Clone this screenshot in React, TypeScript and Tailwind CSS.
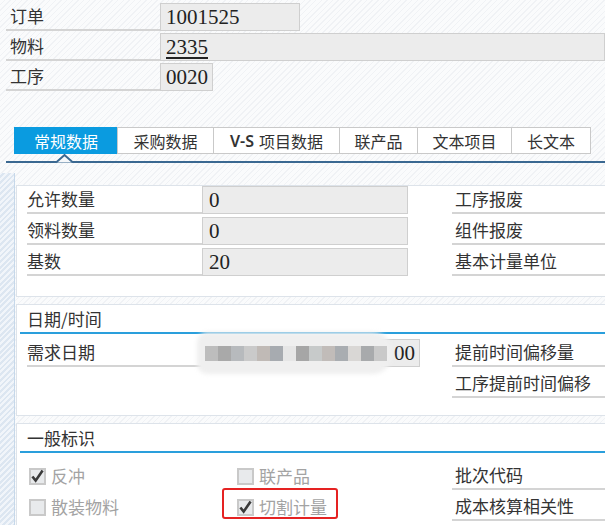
const cjk = "font-['Noto_Sans_CJK_SC','Noto_Sans',sans-serif]";
const serif = "font-['Liberation_Serif','Times_New_Roman',serif]";

const hatch =
  "bg-[image:repeating-linear-gradient(135deg,#fafbfc_0px,#fafbfc_3px,#f0f2f5_3px,#f0f2f5_4px)]";
const hatchBlue =
  "bg-[image:repeating-linear-gradient(135deg,#f1f5fa_0px,#f1f5fa_2px,#dce6f1_2px,#dce6f1_4px)]";

const tabs = [
  { label: "常规数据", w: "w-[104px]", active: true },
  { label: "采购数据", w: "w-[97px]" },
  { label: "V-S 项目数据", w: "w-[127px]" },
  { label: "联产品", w: "w-[79px]" },
  { label: "文本项目", w: "w-[95px]" },
  { label: "长文本", w: "w-[80px]" },
];

const mosaic = [
  "bg-[#bdbdbd]",
  "bg-[#a9a9a9]",
  "bg-[#b7babd]",
  "bg-[#cacaca]",
  "bg-[#c0bab6]",
  "bg-[#a7abb0]",
  "bg-[#e6e6e6]",
  "bg-[#a6a6a6]",
  "bg-[#c7caca]",
  "bg-[#c1bcb9]",
  "bg-[#a9adb1]",
  "bg-[#d9d7d5]",
  "bg-[#a8aaac]",
  "bg-[#c9c9c9]",
];

function HeadRow({
  label,
  value,
  fieldW,
  link,
}: {
  label: string;
  value: string;
  fieldW: string;
  link?: boolean;
}) {
  return (
    <div className="flex h-[28px]">
      <div
        className={`w-[154px] shrink-0 border-b-2 border-[#d4d4d4] pl-[4px] text-[17px] leading-[26px] text-[#333] ${cjk}`}
      >
        {label}
      </div>
      <div
        className={`${fieldW} border border-[#cfcfcf] bg-[#ececec] pl-[5px] text-[21px] leading-[26px] text-[#222] ${serif}`}
      >
        <span className={link ? "underline underline-offset-[3px]" : ""}>{value}</span>
      </div>
    </div>
  );
}

function Label({ text, w = "w-[175px]" }: { text: string; w?: string }) {
  return (
    <div
      className={`${w} shrink-0 border-b-2 border-[#d4d4d4] text-[17px] leading-[26px] text-[#333] ${cjk}`}
    >
      {text}
    </div>
  );
}

function Field({ value, w = "w-[206px]" }: { value: string; w?: string }) {
  return (
    <div
      className={`${w} shrink-0 border border-[#cfcfcf] bg-[#ececec] pl-[6px] text-[21px] leading-[26px] text-[#222] ${serif}`}
    >
      {value}
    </div>
  );
}

function RightLabel({ text }: { text: string }) {
  return (
    <div
      className={`ml-auto w-[153px] shrink-0 border-b-2 border-[#d4d4d4] pl-[3px] text-[17px] leading-[26px] text-[#333] ${cjk}`}
    >
      {text}
    </div>
  );
}

function Check({ checked, label }: { checked?: boolean; label: string }) {
  return (
    <div className={`flex items-center gap-[5px] text-[17px] text-[#a3a3a3] ${cjk}`}>
      <span className="flex h-[17px] w-[17px] items-center justify-center border-2 border-[#c9c9c9] bg-[#e8eaec]">
        {checked && (
          <svg width="14" height="14" viewBox="0 0 14 14">
            <path d="M1.5 7.5 L5 12 L12.5 1" fill="none" stroke="#3a3a3a" strokeWidth="2.8" />
          </svg>
        )}
      </span>
      {label}
    </div>
  );
}

function SectionHead({ text }: { text: string }) {
  return (
    <div
      className={`ml-[3px] h-[29px] border-b-2 border-[#2a9fdc] pl-[7px] text-[17px] leading-[28px] text-[#333] ${cjk}`}
    >
      {text}
    </div>
  );
}

export default function App() {
  return (
    <div className={`h-[525px] w-[605px] overflow-hidden ${hatch}`}>
      <div className="flex flex-col gap-[2px] pl-[6px] pt-[3px]">
        <HeadRow label="订单" value="1001525" fieldW="w-[140px]" />
        <HeadRow label="物料" value="2335" fieldW="flex-1" link />
        <HeadRow label="工序" value="0020" fieldW="w-[53px]" />
      </div>

      <div className="ml-[14px] mt-[36px] flex h-[27px]">
        {tabs.map((t) =>
          t.active ? (
            <div
              key={t.label}
              className={`${t.w} flex items-center justify-center bg-[#0a9be0] text-[16px] text-white ${cjk}`}
            >
              {t.label}
            </div>
          ) : (
            <div
              key={t.label}
              className={`${t.w} -ml-px flex items-center justify-center border border-[#c9c9c9] bg-white text-[16px] text-[#333] ${cjk}`}
            >
              {t.label.startsWith("V-S") ? (
                <>
                  <span className="mr-[5px] font-['Noto_Sans',sans-serif] font-semibold">V-S</span>
                  项目数据
                </>
              ) : (
                t.label
              )}
            </div>
          )
        )}
      </div>

      <div className="relative ml-[6px] mt-[7px] h-[2px] bg-[#3a6891]">
        <svg className="absolute left-[50px] top-[-7px]" width="17" height="9" viewBox="0 0 17 9">
          <polyline points="0,8.5 8.5,1 17,8.5" fill="#f6f8fa" stroke="#3a6891" strokeWidth="2" />
        </svg>
      </div>

      <div className="mt-[10px] flex h-[400px]">
        <div className={`w-[15px] shrink-0 border-r border-[#c6d8ea] ${hatchBlue}`} />
        <div className="flex flex-1 flex-col gap-[7px] pl-px pt-[12px]">
          <div className="flex flex-col gap-[3px] border border-r-0 border-[#dde3ea] bg-white pb-[20px] pl-[10px]">
            {[
              ["允许数量", "0", "工序报废"],
              ["领料数量", "0", "组件报废"],
              ["基数", "20", "基本计量单位"],
            ].map(([l, v, r]) => (
              <div key={l} className="flex h-[28px]">
                <Label text={l} />
                <Field value={v} />
                <RightLabel text={r} />
              </div>
            ))}
          </div>

          <div className="flex flex-col border border-r-0 border-[#dde3ea] bg-white pb-[17px]">
            <SectionHead text="日期/时间" />
            <div className="mt-[5px] flex flex-col gap-[3px] pl-[10px]">
              <div className="relative flex h-[28px]">
                <Label text="需求日期" />
                <div
                  className={`relative w-[218px] shrink-0 border border-[#cfcfcf] bg-[#ececec] pr-[4px] text-right text-[21px] leading-[26px] text-[#222] ${serif}`}
                >
                  00
                </div>
                <div className="absolute left-[170px] top-[-7px] h-[42px] w-[196px] rounded-[20px_40px_40px_20px] bg-[#efefef] blur-[2px]" />
                <div className="absolute left-[178px] top-[7px] flex h-[15px]">
                  {mosaic.map((c, i) => (
                    <div key={i} className={`h-full w-[13px] ${c}`} />
                  ))}
                </div>
                <RightLabel text="提前时间偏移量" />
              </div>
              <div className="flex h-[28px]">
                <RightLabel text="工序提前时间偏移" />
              </div>
            </div>
          </div>

          <div className="flex flex-col border border-r-0 border-[#dde3ea] bg-white pb-[10px]">
            <SectionHead text="一般标识" />
            <div className="mt-[9px] flex flex-col gap-[3px] pl-[12px]">
              <div className="flex h-[28px]">
                <div className="flex w-[208px] shrink-0 items-center">
                  <Check checked label="反冲" />
                </div>
                <div className="flex w-[150px] shrink-0 items-center">
                  <Check label="联产品" />
                </div>
                <RightLabel text="批次代码" />
              </div>
              <div className="flex h-[28px]">
                <div className="flex w-[208px] shrink-0 items-center">
                  <Check label="散装物料" />
                </div>
                <div className="relative flex w-[150px] shrink-0 items-center">
                  <Check checked label="切割计量" />
                  <div className="absolute left-[-15px] top-[-5px] h-[31px] w-[116px] rounded-[3px] border-2 border-[#e52222]" />
                </div>
                <RightLabel text="成本核算相关性" />
              </div>
            </div>
          </div>
        </div>
      </div>
    </div>
  );
}
